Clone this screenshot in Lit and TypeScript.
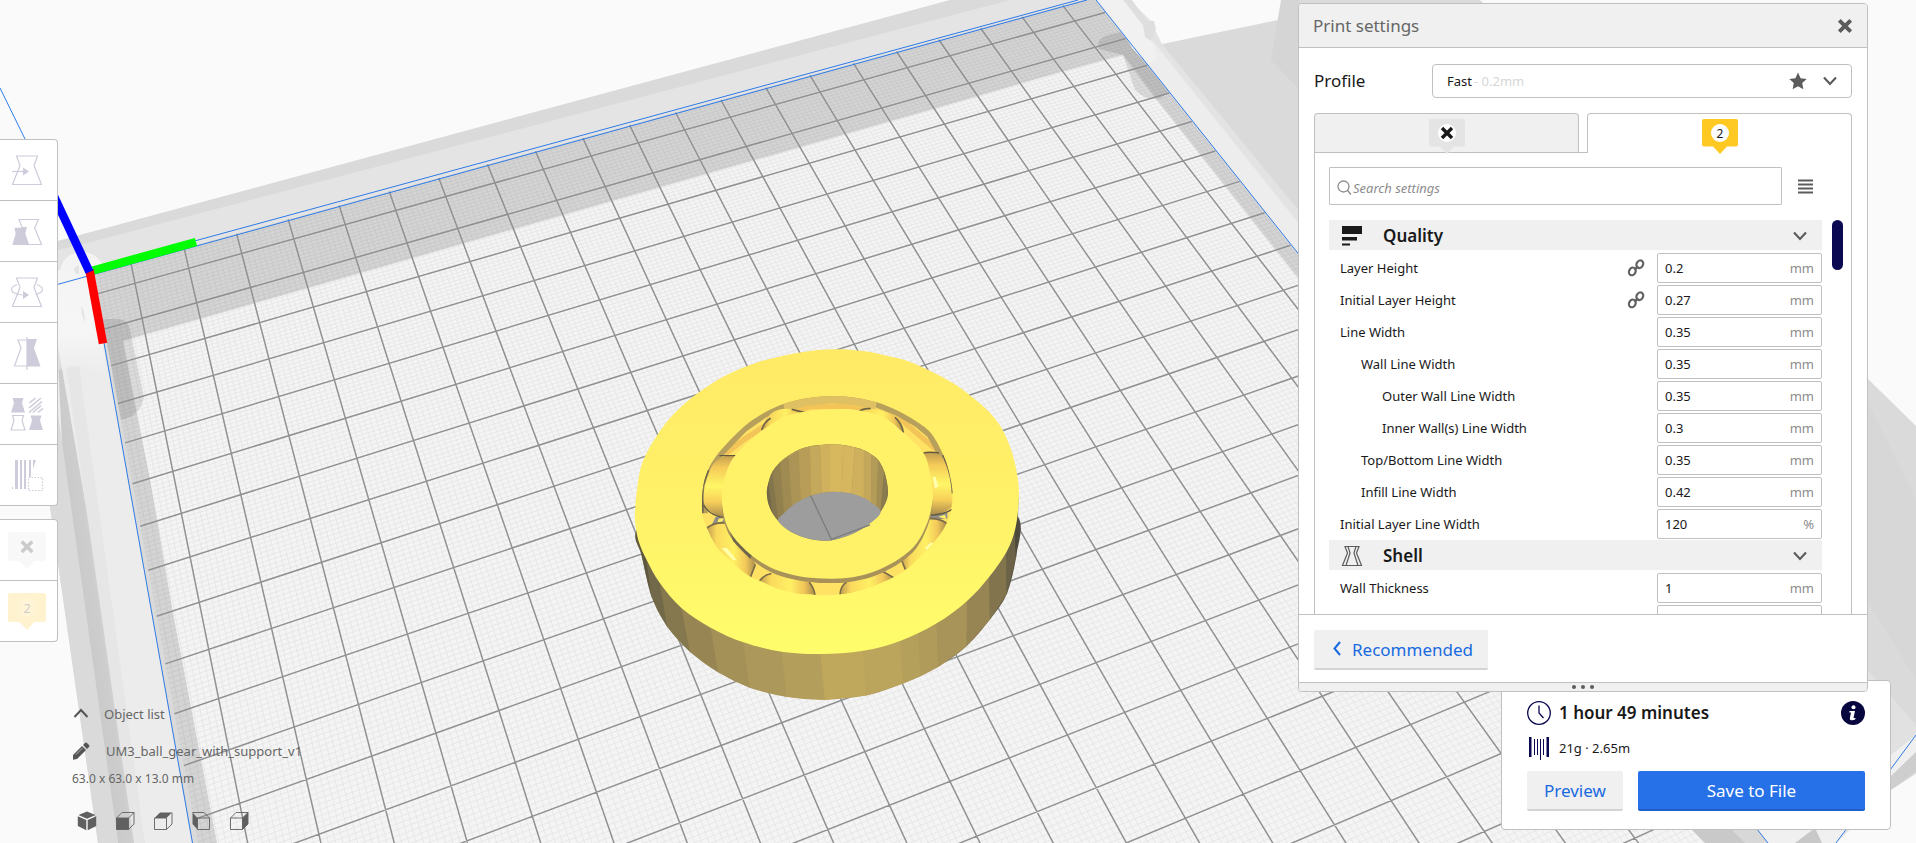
import { LitElement, html, svg, css, nothing } from "lit";
import { customElement, property, state } from "lit/decorators.js";
import { classMap } from "lit/directives/class-map.js";

type Pt = [number, number];

/* Solves the perspective mapping that takes four bed coordinates to screen points. */
function perspective(from: Pt[], to: Pt[]) {
  const m: number[][] = [];
  from.forEach(([u, v], i) => {
    const [x, y] = to[i];
    m.push([u, v, 1, 0, 0, 0, -u * x, -v * x, x]);
    m.push([0, 0, 0, u, v, 1, -u * y, -v * y, y]);
  });
  for (let c = 0; c < 8; c++) {
    let p = c;
    for (let r = c; r < 8; r++) if (Math.abs(m[r][c]) > Math.abs(m[p][c])) p = r;
    [m[c], m[p]] = [m[p], m[c]];
    for (let r = 0; r < 8; r++) {
      if (r === c) continue;
      const f = m[r][c] / m[c][c];
      for (let k = c; k < 9; k++) m[r][k] -= f * m[c][k];
    }
  }
  const h = m.map((row, i) => row[8] / row[i]);
  return (u: number, v: number): Pt => {
    const w = h[6] * u + h[7] * v + 1;
    return [(h[0] * u + h[1] * v + h[2]) / w, (h[3] * u + h[4] * v + h[5]) / w];
  };
}

const toScreen = perspective(
  [[1, 1], [1, 13], [21, 1], [17, 19]],
  [[135, 283.3], [239.7, 803.3], [1074.7, 21], [1355.9, 747.3]],
);
const BED = { u0: 0.32, u1: 21.75, v0: 0.4, v1: 23.6 };

const seg = (a: Pt, b: Pt) =>
  `M${a[0].toFixed(1)} ${a[1].toFixed(1)}L${b[0].toFixed(1)} ${b[1].toFixed(1)}`;

function gridPath(step: number) {
  let d = "";
  const n = Math.round(1 / step);
  for (let i = 0; i <= 22 * n; i++) {
    const u = i * step;
    if (u > BED.u0 && u < BED.u1 && !(n > 1 && i % n === 0))
      d += seg(toScreen(u, BED.v0), toScreen(u, BED.v1));
  }
  for (let i = 0; i <= 24 * n; i++) {
    const v = i * step;
    if (v > BED.v0 && v < BED.v1 && !(n > 1 && i % n === 0))
      d += seg(toScreen(BED.u0, v), toScreen(BED.u1, v));
  }
  return d;
}

const bedOutline = ([[BED.u0, BED.v0], [BED.u1, BED.v0], [BED.u1, BED.v1], [BED.u0, BED.v1]] as Pt[])
  .map(([u, v]) => toScreen(u, v).map((n) => n.toFixed(1)).join(","))
  .join(" ");

/* Closed curve through a ring of points. */
function ring(coords: string) {
  const n = coords.trim().split(/[\s,]+/).map(Number);
  const p: Pt[] = [];
  for (let i = 0; i < n.length; i += 2) p.push([n[i], n[i + 1]]);
  const at = (i: number) => p[(i + p.length) % p.length];
  let d = `M${p[0]}`;
  for (let i = 0; i < p.length; i++) {
    const [a, b, c, e] = [at(i - 1), at(i), at(i + 1), at(i + 2)];
    d += `C${b[0] + (c[0] - a[0]) / 6} ${b[1] + (c[1] - a[1]) / 6} ${c[0] - (e[0] - b[0]) / 6} ${c[1] - (e[1] - b[1]) / 6} ${c[0]} ${c[1]}`;
  }
  return d + "Z";
}

const OUTER = ring("75 545 82 470 98 395 140 318 195 248 268 186 350 135 440 98 520 77 600 63 665 58 720 59 780 66 830 77 890 92 960 122 1030 160 1085 200 1140 248 1175 295 1200 350 1216 405 1226 470 1225 530 1215 600 1190 665 1138 740 1072 812 980 880 872 932 760 962 632 972 515 965 400 937 302 893 215 835 150 760 110 690 88 640 77 590");
const SKIRT = ring("80 600 96 680 125 800 172 890 240 965 325 1027 420 1073 530 1100 645 1109 770 1096 880 1060 985 1010 1070 948 1140 868 1190 792 1218 680 1224 560 1100 500 650 500 180 500");
const TRACK = ring("277 550 277 490 290 430 325 370 400 292 460 250 520 222 590 205 665 198 735 203 800 217 865 243 925 278 965 312 1000 375 1018 430 1028 490 1024 540 1010 580 985 620 940 670 890 718 850 742 790 768 735 785 690 793 640 796 560 790 500 775 450 752 420 740 370 700 320 650 290 592");
const RACE = ring("335 500 345 440 375 377 455 302 530 258 600 243 670 238 740 240 820 262 880 308 940 368 960 430 968 500 955 570 920 640 870 685 810 718 760 735 700 745 620 745 550 735 480 712 420 672 370 620 345 570");
const BORE = ring("470 490 476 455 487 425 510 397 535 377 565 360 600 349 630 345 660 343 700 345 735 352 762 361 785 374 805 390 823 425 833 470 832 505 812 545 780 580 740 605 690 625 650 632 600 627 545 607 505 573 480 535");
const FLOOR = ring("505 573 522 550 545 528 572 511 602 497 635 489 670 485 700 487 730 492 757 502 780 515 812 545 780 580 740 605 690 625 650 632 600 627 545 607");

const SIDE_TOP: Pt[] = [[88, 640], [110, 690], [150, 760], [215, 835], [302, 893], [400, 937], [515, 965], [632, 972], [760, 962], [872, 932], [925, 908], [980, 880], [1072, 812], [1138, 740], [1190, 665], [1215, 600], [1225, 500]];
const SIDE_BOTTOM: Pt[] = [[96, 680], [125, 800], [172, 890], [240, 965], [325, 1027], [420, 1073], [530, 1100], [645, 1109], [770, 1096], [880, 1060], [932, 1037], [985, 1010], [1070, 948], [1140, 868], [1190, 792], [1218, 680], [1222, 590]];
const SIDE_FILL = ["#5d573f", "#72694a", "#85784e", "#978653", "#a49158", "#ac985a", "#b49e5b", "#bfa75c", "#bba45c", "#b5a05b", "#b09b5a", "#a89459", "#978654", "#82754e", "#6b6248", "#4c483c"];

const HOLE_TOP: Pt[] = [[470, 490], [476, 455], [487, 425], [510, 397], [535, 377], [565, 360], [600, 349], [630, 345], [660, 343], [700, 345], [735, 352], [762, 361], [785, 374], [805, 390], [823, 425], [833, 470]];
const HOLE_BASE: Pt[] = [[475, 525], [488, 552], [505, 573], [522, 550], [545, 528], [572, 511], [602, 497], [635, 489], [660, 485], [695, 487], [725, 491], [762, 505], [785, 520], [800, 534], [812, 545], [828, 515]];
const HOLE_FILL = ["#75694a", "#83754c", "#92814f", "#9f8b52", "#ab9456", "#b79d58", "#c4a85b", "#d0b15d", "#d8b85f", "#d6b65e", "#ceb05d", "#c3a75b", "#b39b58", "#a28e55", "#8b7b50"];

const facets = (a: Pt[], b: Pt[], fill: string[]) =>
  fill.map((f, i) => svg`<polygon points="${a[i]} ${a[i + 1]} ${b[i + 1]} ${b[i]}" fill=${f} stroke=${f} stroke-width="1"></polygon>`);

@customElement("build-plate")
export class BuildPlate extends LitElement {
  static styles = css`
    :host { display: block; }
    .scene { display: block; width: 100%; height: 100%; }
  `;

  render() {
    return html`<svg class="scene" viewBox="0 0 1916 843" preserveAspectRatio="xMinYMin slice" role="img" aria-label="3D view of the build plate">
      <defs>
        <linearGradient id="rail" gradientUnits="userSpaceOnUse" x1="84" y1="650" x2="119" y2="645">
          <stop offset="0" stop-color="#c9c9c9"></stop><stop offset=".55" stop-color="#cdcdcd"></stop><stop offset="1" stop-color="#e4e4e4"></stop>
        </linearGradient>
        <linearGradient id="corner" x1="0" y1="0" x2="0" y2="1">
          <stop offset="0" stop-color="#f4f4f4"></stop><stop offset=".6" stop-color="#f6f6f6"></stop><stop offset="1" stop-color="#f0f0f0" stop-opacity=".3"></stop>
        </linearGradient>
        <linearGradient id="skirt">
          <stop offset="0" stop-color="#5d573f"></stop><stop offset=".12" stop-color="#8d7f50"></stop><stop offset=".5" stop-color="#bfa75c"></stop><stop offset=".8" stop-color="#a08c57"></stop><stop offset="1" stop-color="#4c483c"></stop>
        </linearGradient>
        <linearGradient id="top" x1="0" y1="0" x2="0" y2="1">
          <stop offset="0" stop-color="#ffea66"></stop><stop offset=".5" stop-color="#fff168"></stop><stop offset="1" stop-color="#fffd6c"></stop>
        </linearGradient>
        <linearGradient id="ballL" x1="0" y1="0" x2="0" y2="1">
          <stop offset="0" stop-color="#c49f50"></stop><stop offset=".2" stop-color="#f5cb58"></stop><stop offset=".5" stop-color="#fff766"></stop><stop offset=".75" stop-color="#f8cf5a"></stop><stop offset="1" stop-color="#a88a4c"></stop>
        </linearGradient>
        <linearGradient id="ballB" x1="0" y1="0" x2="1" y2="0">
          <stop offset="0" stop-color="#c09b50"></stop><stop offset=".2" stop-color="#fad95c"></stop><stop offset=".55" stop-color="#fff064"></stop><stop offset=".8" stop-color="#f2c758"></stop><stop offset="1" stop-color="#a88c4e"></stop>
        </linearGradient>
        <clipPath id="track"><path d=${TRACK}></path></clipPath>
        <clipPath id="bore"><path d=${BORE}></path></clipPath>
        <clipPath id="bed"><polygon points=${bedOutline}></polygon></clipPath>
      </defs>

      <rect width="1916" height="843" fill="#fafafa"></rect>
      <!-- printer frame -->
      <polygon points="50,243 950,0 1130,0 1700,700 1766,843 98,843 50,507" fill="#dadada"></polygon>
      <polygon points="58,250 95,241 1010,0 1098,0 92,277 58,284" fill="#e4e4e4"></polygon>
      <polygon points="1096,0 1140,0 1916,940 1768,843" fill="#ededed"></polygon>
      <polygon points="1120,0 1142,0 1460,400 1916,960 1860,960 1440,400" fill="#e3e3e3"></polygon>
      <polygon points="1162,44 1300,14 1300,0 1480,0 1867,378 1916,426 1916,772 1891,788 1768,860 1300,212" fill="#dadada"></polygon>
      <polygon points="1130,0 1281,0 1278,20 1162,44 1150,20" fill="#fafafa"></polygon>
      <polygon points="1281,0 1300,0 1300,90 1271,60" fill="#d5d5d5"></polygon>
      <polygon points="1867,400 1916,500 1916,680 1867,600" fill="#d7d7d7"></polygon>
      <polygon points="1867,669 1916,725 1916,843 1836,843 1867,800" fill="#e1e1e1"></polygon>
      <polygon points="1891,755 1916,735 1916,760 1891,776" fill="#f0f0f0"></polygon>
      <polygon points="1891,776 1916,752 1916,772 1891,790" fill="#cecece"></polygon>
      <polygon points="1891,790 1916,774 1916,843 1836,843" fill="#fafafa"></polygon>
      <!-- left rail -->
      <polygon points="57,280 92,275 192,843 98,843 57,440" fill="#ececec"></polygon>
      <polygon points="56,400 62,443 118,843 98,843 50,507" fill="#dadada"></polygon>
      <polygon points="57,340 66,392 145,843 118,843 62,443" fill="url(#rail)"></polygon>
      <polygon points="66,366 79,366 145,843 134,843" fill="#e6e6e6"></polygon>
      <ellipse cx="82" cy="272" rx="22" ry="20" fill="#f3f3f3"></ellipse>
      <path d="M57 270Q85 265 98 300L106 374 80 366 57 370Z" fill="url(#corner)"></path>
      <path d="M74 268l5-3v10l-4-2zM81 305l3 6 1 12-3-8z" fill="#e4e4e4"></path>

      <!-- bed -->
      <polygon points=${bedOutline} fill="#f4f4f4"></polygon>
      <path d=${gridPath(0.1)} stroke="#e5e5e5" stroke-width=".8" fill="none"></path>
      <g clip-path="url(#bed)" fill="#000">
        <path fill-opacity=".13" d="M80 260L1096 -10 1320 280 1900 990 1840 990 1298 278 1157 100 1123 55 1040 78 958 102 340 279 123 341 134 400 150 480 173 613 217 843 190 850Z"></path>
        <path fill-opacity=".1" d="M100 319h20q8 2 10 10l14 68q-4 20-24 23h-10z"></path>
        <path fill-opacity=".1" d="M1098 43q2-8 24-11l8-6 45 60-14 12q-14 4-26-8l-12-35-24-6z"></path>
      </g>
      <path d=${gridPath(1)} stroke="#909193" stroke-width="1.5" fill="none"></path>

      <!-- front corner of the frame -->
      <polygon points="1705,843 1690,828 1730,828 1745,843" fill="#c9c9c9"></polygon>
      <polygon points="1745,843 1730,828 1760,828 1772,843" fill="#d8d8d8"></polygon>
      <polygon points="1757,828 1846,828 1836,843 1768,843" fill="#f0f0f0"></polygon>
      <polygon points="1795,843 1815,828 1822,843" fill="#c8c8c8"></polygon>

      <!-- near top corner bracket -->
      <path d="M1098 0l24 30 10 18 16 17 8-6-1-10-12-24-20-25z" fill="#f1f1f1"></path>
      <path d="M1124 0h8l14 20 8 1 2 8-5 12-6-4-2-12z" fill="#dedede"></path>

      <g stroke="#2f7be8" stroke-width="1" fill="none">
        <path d="M58 284.300L1087 0M189 242.500L1078 0M1096 0L1291 244.500 1768 843M92 275L192.500 843M0 88L25 139M1836 843L1916 735"></path>
      </g>
      <!-- origin axes -->
      <g stroke-width="8.500" fill="none">
        <path d="M93 270.500L196 242" stroke="#0f0"></path>
        <path d="M89.500 270L103 343.500" stroke="#f00"></path>
        <path d="M89.500 272L52 192" stroke="#00f"></path>
      </g>

      <!-- ball bearing -->
      <g transform="translate(610 330) scale(.33333)">
        <path d=${SKIRT} fill="url(#skirt)"></path>
        ${facets(SIDE_TOP, SIDE_BOTTOM, SIDE_FILL)}
        <path fill="url(#top)" d=${OUTER}></path>
        <g clip-path="url(#track)">
          <rect x="270" y="190" width="770" height="620" fill="#ffe264"></rect>
          <path d="M340 376L400 330 460 290 520 255 600 230 700 228 790 240 880 275 990 368" stroke="#f3c457" stroke-width="16" fill="none"></path>
          <path d="M278 550V490L290 430 325 370 400 292 460 250 520 222 590 205 665 198 735 203 800 217 865 243 925 278 965 312 1000 375 1018 430" stroke="#b7a05c" stroke-width="30" fill="none"></path>
          <path d="M520 222L590 205 665 198 735 203 800 217" stroke="#dfc062" stroke-width="44" fill="none"></path>
          <path d="M278 550V470L295 420" stroke="#6b624a" stroke-width="6" fill="none"></path>
          <path d="M1000 375L1018 430 1028 490" stroke="#6b624a" stroke-width="8" fill="none"></path>
          <path d="M305 585l12-25h26v20zM958 568l4-14 50-8v20z" fill="#8f8d86"></path>
          <path d="M326 566l16-2-4 10-16 4zM985 560l20-6 4 14z" fill="#ffee68"></path>
          <!-- balls -->
          <path d="M455 300Q475 225 550 238L586 248 530 270 455 305Z" fill="url(#ballB)"></path>
          <path d="M740 248Q775 228 820 243 870 262 880 308L820 270Z" fill="url(#ballB)"></path>
          <path d="M455 300q8-24 27-35M545 238l40 10M740 248q18-14 42-12M855 262q22 20 25 46" stroke="#6f6446" stroke-width="5" fill="none"></path>
          <path d="M378 376Q320 372 300 420 275 480 282 520 300 556 345 562L350 440Z" fill="url(#ballL)"></path>
          <path d="M937 370Q985 362 1000 385 1030 450 1025 530 1010 550 958 556L975 470Z" fill="url(#ballL)"></path>
          <path d="M328 377h50M280 525q22 34 65 38M937 370q20-6 50-1M1026 538q-20 14-66 18" stroke="#62583f" stroke-width="4" fill="none"></path>
          <path d="M290 594Q320 575 350 582L437 702 422 740Q320 690 290 594Z" fill="url(#ballB)"></path>
          <path d="M958 566Q1000 562 1010 580 985 660 886 720L872 684Z" fill="url(#ballB)"></path>
          <path d="M448 754Q460 735 485 730L600 755 615 795Q520 795 448 754Z" fill="url(#ballB)"></path>
          <path d="M690 795Q695 765 712 756L815 722 852 743Q790 780 690 795Z" fill="url(#ballB)"></path>
          <path d="M290 594q25-18 55-15M422 740l14-36M448 754q14-20 36-23M598 757q14 18 17 38M690 794q2-28 20-38M815 722l36 21M886 718l-14-34M958 566q30-2 52 14" stroke="#7a6c48" stroke-width="5" fill="none"></path>
          <path d="M335 655l15-2 30 38-12-2zM968 440l8 0 10 30-12 4zM945 655l18-18 10 6-16 20z" fill="#ffffae"></path>
        </g>
        <path d=${RACE} transform="translate(0 13)" fill="#a8925a" clip-path="inset(262px 0 0 0)"></path>
        <path d="M345 565L370 634 420 686 426 676 350 560Z" fill="#6f654a"></path>
        <path d=${RACE} fill="#fff269"></path>
        <g clip-path="url(#bore)">
          <rect x="460" y="340" width="380" height="300" fill="#85784e"></rect>
          ${facets(HOLE_TOP, HOLE_BASE, HOLE_FILL)}
          <path d="M505 397L565 360 630 342 700 342 762 358 805 387" stroke="#bda25a" stroke-width="6" fill="none" stroke-opacity=".4"></path>
        </g>
        <path d=${FLOOR} fill="#9d9d9d"></path>
        <path d="M602 497L664 628 780 585" stroke="#7d7d7d" stroke-width="4" fill="none"></path>
      </g>
    </svg>`;
  }
}

const figure = "M4.5 1h21L22 10.500 29.500 29.500H.5L8 10.500z";
const smallFigure = "M1.500 0h11L11 5l3 9.500H0L3 5z";

const toolIcons: Record<string, unknown> = {
  move: svg`<path d=${figure}></path><path d="M0 16.500h11"></path><path class="solid" d="M11 12.500l6 4-6 4z"></path>`,
  scale: svg`<path d="M14.700 11.500H10L7 3.500h19.300L22.700 12 29.500 28.500H17"></path><path class="solid" d="M2.300 11.700h12.400l-1.400 6 4 11.300H.3l3.400-11.300z"></path>`,
  rotate: svg`<path d=${figure}></path><path d="M5 7.500C1 9-.5 11-.5 12.500c0 2.500 4 5 11 5.500M25 7.500c4 1.500 5.500 3.500 5.500 5 0 2.500-3 4-7 5"></path><path class="solid" d="M11 14l6 4-6 4z"></path>`,
  mirror: svg`<path d="M15-1v33"></path><path d="M15 2H6l3 8-6.500 18H15"></path><path class="solid" d="M15 1h10l-3 9 6.500 18.500H15z"></path>`,
  models: svg`<g transform="translate(-1 -1)"><path class="solid" d=${smallFigure}></path><path d="M18.500 5l6-5M18 10l12-10M18 14.500l13-11M22 14.500l8-7M27 14.500l5-4" stroke-width="1.600"></path><path d=${smallFigure} transform="translate(0 17.500)"></path><path class="solid" d=${smallFigure} transform="translate(18 17.500)"></path></g>`,
  blocker: svg`<path class="solid" d="M3 0h3v29H3V9zM8 0h2v29H8zM12 0h2v29h-2zM17 0h2v17h-2zM21 0h3l-3 9zM0 27h1v2H0z"></path><path d="M16.500 17.500h14v13h-14z" stroke-dasharray="1.500 1.500"></path>`,
};

const chevron = svg`<path d="M2 4.500l6 6.500 6-6.500" fill="none" stroke="currentColor" stroke-width="2.200"></path>`;
const cross = svg`<path d="M2 2l10 10M12 2L2 12" stroke="currentColor" stroke-width="3.400"></path>`;

@customElement("extruder-badge")
export class ExtruderBadge extends LitElement {
  @property() label = "";
  @property({ type: Boolean }) enabled = false;
  @property({ type: Boolean }) faint = false;

  static styles = css`
    :host { display: block; }
    svg { display: block; width: 100%; height: 100%; }
    .body { fill: #e4e4e4; }
    .on { fill: #ffc924; }
    .disc { fill: #fff; }
    .faint .disc { opacity: .15; }
    .text { font: 12px "Noto Sans", sans-serif; fill: #191919; text-anchor: middle; }
    .cross { color: #191919; }
    .faint { opacity: .22; }
  `;

  render() {
    return html`<svg class=${classMap({ faint: this.faint })} viewBox="0 0 36 35" aria-hidden="true">
      <path class=${classMap({ body: true, on: this.enabled })} d="M2 0h32q2 0 2 2v23.500q0 2-2 2h-9L18 35l-7-7.500H2q-2 0-2-2V2q0-2 2-2z"></path>
      <circle class="disc" cx="18" cy="14" r="9"></circle>
      ${this.enabled
        ? svg`<text class="text" x="18" y="18.500">${this.label}</text>`
        : svg`<g class="cross" transform="translate(11 7)">${cross}</g>`}
    </svg>`;
  }
}

@customElement("tool-rail")
export class ToolRail extends LitElement {
  static styles = css`
    :host { display: flex; flex-direction: column; gap: 13px; width: 58px; }
    .group { display: flex; flex-direction: column; background: #fff; border: 1px solid #c0c0c0; border-left: 0; border-radius: 0 4px 4px 0; }
    .tool { display: flex; align-items: center; height: 60px; padding: 0 0 0 12px; border: 0; background: none; }
    .tool + .tool { border-top: 1px solid #c0c0c0; height: 61px; }
    .icon { width: 30px; height: 30px; overflow: visible; fill: none; stroke: #cecbda; stroke-width: 1.2; }
    .solid { fill: #cecbda; stroke: none; }
    .extruder { padding-left: 8px; }
    .badge { width: 38px; height: 37px; }
  `;

  render() {
    const names: Record<string, string> = { move: "Move", scale: "Scale", rotate: "Rotate", mirror: "Mirror", models: "Per model settings", blocker: "Support blocker" };
    return html`
      <div class="group">
        ${Object.keys(names).map((k) => html`<button class="tool" aria-label=${names[k]}><svg class="icon" viewBox="0 0 30 30">${toolIcons[k]}</svg></button>`)}
      </div>
      <div class="group">
        <button class="tool extruder" aria-label="Extruder 1"><extruder-badge class="badge" faint></extruder-badge></button>
        <button class="tool extruder" aria-label="Extruder 2"><extruder-badge class="badge" faint enabled label="2"></extruder-badge></button>
      </div>`;
  }
}

@customElement("object-info")
export class ObjectInfo extends LitElement {
  static styles = css`
    :host { display: flex; flex-direction: column; font: 13px/20px "Noto Sans", sans-serif; color: #666; }
    .row { display: flex; align-items: center; gap: 14px; height: 37px; padding: 0; border: 0; background: none; font: inherit; color: inherit; text-align: left; }
    .icon { width: 18px; height: 18px; }
    .size { margin-bottom: 22px; font-size: 12px; }
    .name { padding-left: 2px; }
    .views { display: flex; gap: 18px; padding-left: 5px; }
    .view { width: 20px; height: 20px; padding: 0; border: 0; background: none; color: #606060; }
    .cube { display: block; width: 20px; height: 20px; }
    .face { fill: currentColor; }
    .edge { fill: none; stroke: currentColor; stroke-width: .9; }
  `;

  render() {
    const wire = svg`<path class="edge" d="M1.500 7L7 1.500h12V13l-5.500 5.500h-12zM1.500 7h12v11.500M13.500 7L19 1.500"></path>`;
    const cubes = [
      ["3D view", svg`<path class="face" d="M10 .5L18.500 4 10 7.800 1.500 4zM.8 5.300L9.300 9v10.200L.8 15zM19.200 5.300L10.700 9v10.200L19.200 15z"></path>`],
      ["Front view", svg`${wire}<path class="face" d="M1.500 7h12v11.500h-12z"></path>`],
      ["Top view", svg`<path class="edge" d="M1.500 7h12v11.500h-12zM13.500 18.500L19 13V1.500"></path><path class="face" d="M1.500 7L7 1.500h12L13.500 7z"></path>`],
      ["Left view", svg`<path class="edge" d="M6.500 7h12v11.500h-12zM1.500 1.500H13L18.500 7"></path><path class="face" d="M1.500 1.500L6.500 7v11.500L1.500 13z"></path>`],
      ["Right view", svg`${wire}<path class="face" d="M13.500 7L19 1.500V13l-5.500 5.500z"></path>`],
    ];
    return html`
      <button class="row">
        <svg class="icon" viewBox="0 0 18 18"><path d="M2.500 12L9 5l6.500 7" fill="none" stroke="#555" stroke-width="2"></path></svg>
        Object list
      </button>
      <button class="row">
        <svg class="icon" viewBox="0 0 18 18"><path d="M1 13l9-9 4 4-9 9-4 .8zM11 3l2-2q1-1 2 0l2 2q1 1 0 2l-2 2z" fill="#555"></path><path d="M4 12.500l6.500-6.500" stroke="#ccc" stroke-width=".8"></path></svg>
        <span class="name">UM3_ball_gear_with_support_v1</span>
      </button>
      <div class="size">63.0 x 63.0 x 13.0 mm</div>
      <div class="views">
        ${cubes.map(([name, art]) => html`<button class="view" aria-label=${name}><svg class="cube" viewBox="0 0 20 20">${art}</svg></button>`)}
      </div>`;
  }
}

interface Setting { label: string; value: string; unit: string; depth: number; linked?: boolean }

const quality: Setting[] = [
  { label: "Layer Height", value: "0.2", unit: "mm", depth: 0, linked: true },
  { label: "Initial Layer Height", value: "0.27", unit: "mm", depth: 0, linked: true },
  { label: "Line Width", value: "0.35", unit: "mm", depth: 0 },
  { label: "Wall Line Width", value: "0.35", unit: "mm", depth: 1 },
  { label: "Outer Wall Line Width", value: "0.35", unit: "mm", depth: 2 },
  { label: "Inner Wall(s) Line Width", value: "0.3", unit: "mm", depth: 2 },
  { label: "Top/Bottom Line Width", value: "0.35", unit: "mm", depth: 1 },
  { label: "Infill Line Width", value: "0.42", unit: "mm", depth: 1 },
  { label: "Initial Layer Line Width", value: "120", unit: "%", depth: 0 },
];
const shell: Setting[] = [
  { label: "Wall Thickness", value: "1", unit: "mm", depth: 0 },
  { label: "", value: "", unit: "", depth: 1 },
];

@customElement("print-settings")
export class PrintSettings extends LitElement {
  @state() private extruder = 2;

  static styles = css`
    :host { display: flex; flex-direction: column; box-sizing: border-box; background: #fff; border: 1px solid #c0c0c0; border-radius: 4px; font: 13px/20px "Noto Sans", sans-serif; color: #191919; overflow: hidden; }
    * { box-sizing: border-box; }
    button, input, select { font: inherit; color: inherit; }
    button { padding: 0; border: 0; background: none; }
    .head { display: flex; align-items: center; justify-content: space-between; height: 44px; padding: 0 14px 0 14px; background: #f0f0f0; border-bottom: 1px solid #c0c0c0; flex: none; }
    .title { margin: 0; font-size: 17px; font-weight: 400; color: #666; }
    .close { color: #5c5c5c; width: 16px; height: 16px; }
    .close svg { display: block; width: 16px; height: 16px; }
    .main { display: flex; flex-direction: column; flex: 1; min-height: 0; padding: 16px 15px 0; }
    .profile { display: flex; align-items: center; justify-content: space-between; flex: none; margin-bottom: 15px; }
    .profile-label { font-size: 17px; }
    .field { display: grid; width: 420px; }
    .select { grid-area: 1 / 1; height: 34px; appearance: none; border: 1px solid #c0c0c0; border-radius: 4px; background: #fff; padding: 0 14px; }
    .adorn { grid-area: 1 / 1; display: flex; align-items: center; padding: 0 14px 0 42px; pointer-events: none; color: #5c5c5c; gap: 15px; }
    .height { color: #d6d6d6; flex: 1; }
    .star { width: 18px; height: 18px; }
    .chev { width: 16px; height: 16px; color: #5c5c5c; }
    .tabs { display: grid; grid-template-columns: 1fr 1fr; column-gap: 8px; flex: none; border-bottom: 1px solid #c0c0c0; height: 40px; }
    .tab { display: flex; justify-content: center; height: 39px; padding-top: 5px; background: #f0f0f0; border: 1px solid #c0c0c0; border-bottom: 0; border-radius: 4px 4px 0 0; }
    .tab.active { background: #fff; height: 40px; }
    .badge { width: 36px; height: 35px; }
    .body { flex: 1; min-height: 0; display: flex; flex-direction: column; border: 1px solid #c0c0c0; border-width: 0 1px; padding: 14px 8px 0 14px; overflow: hidden; }
    .search { display: flex; align-items: center; gap: 16px; flex: none; padding-right: 30px; margin-bottom: 15px; }
    .box { flex: 1; display: flex; align-items: center; gap: 1px; height: 38px; padding: 3px 6px 0; border: 1px solid #c0c0c0; border-radius: 1px; color: #8c8c8c; }
    .query { flex: 1; border: 0; outline: 0; padding: 0; background: none; }
    .query::placeholder { color: #8c8c8c; font-style: italic; opacity: 1; }
    .lens { width: 16px; height: 16px; }
    .menu { width: 15px; height: 19px; }
    .menu svg { display: block; width: 15px; height: 15px; }
    .scroller { display: flex; justify-content: space-between; flex: 1; min-height: 0; }
    .list { width: 493px; overflow: hidden; }
    .thumb { width: 11px; height: 50px; border-radius: 6px; background: #0a0850; }
    .cat { display: flex; align-items: center; width: 100%; height: 30px; margin-bottom: 2px; padding: 2px 14px 0 12px; background: #f0f0f0; gap: 20px; }
    .cat-icon { width: 22px; height: 22px; }
    .cat-name { flex: 1; text-align: left; font-size: 17px; font-weight: 600; }
    .row { display: flex; align-items: center; height: 32px; padding-left: 11px; }
    .name { flex: 1; }
    .depth1 { padding-left: 21px; }
    .depth2 { padding-left: 42px; }
    .link { width: 18px; height: 18px; margin-right: 12px; }
    .value { display: grid; width: 165px; }
    .input { grid-area: 1 / 1; width: 100%; height: 30px; padding: 0 7px; border: 1px solid #c0c0c0; border-radius: 2px; background: #fff; }
    .unit { grid-area: 1 / 1; justify-self: end; align-self: center; padding-right: 8px; color: #8c8c8c; pointer-events: none; }
    .foot { flex: none; height: 68px; padding: 15px; border-top: 1px solid #c0c0c0; }
    .back { display: flex; align-items: center; height: 40px; padding: 2px 15px 0 17px; gap: 9px; background: #f0f0f0; border-bottom: 2px solid #d4d4d4; border-radius: 2px; color: #196ae0; font-size: 17px; }
    .arrow { width: 12px; height: 20px; }
    .grip { flex: none; display: flex; align-items: center; justify-content: center; gap: 5px; height: 9px; border-top: 1px solid #c0c0c0; background: #f0f0f0; }
    .dot { width: 4px; height: 4px; border-radius: 50%; background: #5c5c5c; }
  `;

  private row(s: Setting, i: number, group: string) {
    const id = `${group}-${i}`;
    return html`<div class="row">
      <label class=${classMap({ name: true, depth1: s.depth === 1, depth2: s.depth === 2 })} for=${id}>${s.label}</label>
      ${s.linked
        ? html`<svg class="link" viewBox="0 0 18 18" fill="none" stroke="#606060" stroke-width="2.200"><ellipse cx="5.300" cy="12.500" rx="3.200" ry="4" transform="rotate(28 5.500 12.500)"></ellipse><ellipse cx="12.800" cy="5.200" rx="3.200" ry="4" transform="rotate(28 12.800 5.200)"></ellipse><path d="M7.500 11l3.500-4"></path></svg>`
        : nothing}
      <div class="value">
        <input class="input" id=${id} .value=${s.value} />
        <span class="unit">${s.unit}</span>
      </div>
    </div>`;
  }

  private category(name: string, icon: unknown) {
    return html`<button class="cat">
      <svg class="cat-icon" viewBox="0 0 22 22">${icon}</svg>
      <span class="cat-name">${name}</span>
      <svg class="chev" viewBox="0 0 16 16">${chevron}</svg>
    </button>`;
  }

  private tab(n: number) {
    return html`<button class=${classMap({ tab: true, active: this.extruder === n })} role="tab" aria-label="Extruder ${n}" @click=${() => (this.extruder = n)}>
      <extruder-badge class="badge" ?enabled=${n === 2} label=${n}></extruder-badge>
    </button>`;
  }

  render() {
    return html`
      <header class="head">
        <h1 class="title">Print settings</h1>
        <button class="close" aria-label="Close"><svg viewBox="0 0 14 14">${cross}</svg></button>
      </header>
      <div class="main">
        <div class="profile">
          <label class="profile-label" for="profile">Profile</label>
          <div class="field">
            <select class="select" id="profile"><option>Fast</option></select>
            <div class="adorn">
              <span class="height">- 0.2mm</span>
              <svg class="star" viewBox="0 0 18 18"><path d="M9 .5l2.600 5.700 6.100.7-4.500 4.200 1.200 6.200L9 14.200l-5.400 3.100 1.200-6.200L.3 6.900l6.100-.7z" fill="currentColor"></path></svg>
              <svg class="chev" viewBox="0 0 16 16">${chevron}</svg>
            </div>
          </div>
        </div>
        <div class="tabs" role="tablist">${this.tab(1)}${this.tab(2)}</div>
        <div class="body">
          <div class="search">
            <div class="box">
              <svg class="lens" viewBox="0 0 16 16" fill="none" stroke="currentColor" stroke-width="1.300"><circle cx="7.500" cy="6.500" r="5.500"></circle><path d="M11.500 10.500l3.500 4"></path></svg>
              <input class="query" placeholder="Search settings" aria-label="Search settings" />
            </div>
            <button class="menu" aria-label="Setting visibility"><svg viewBox="0 0 15 15"><path d="M0 1.500h15M0 5.500h15M0 9.500h15M0 13.500h15" stroke="#5c5c5c" stroke-width="1.800"></path></svg></button>
          </div>
          <div class="scroller">
            <div class="list">
              ${this.category("Quality", svg`<path d="M1 1h20v8H1zM1 12h15v3.500H1zM1 18.500h8v2H1z" fill="#191919"></path>`)}
              ${quality.map((s, i) => this.row(s, i, "quality"))}
              ${this.category("Shell", svg`<path d="M4 1.500h14L15.500 8l5 12.500h-19L6.500 8zM7 1.500L9 8 5 20.500M15 1.500L13 8l4 12.500" fill="none" stroke="#5c5c5c" stroke-width="1.200"></path>`)}
              ${shell.map((s, i) => this.row(s, i, "shell"))}
            </div>
            <div class="thumb"></div>
          </div>
        </div>
      </div>
      <footer class="foot">
        <button class="back"><svg class="arrow" viewBox="0 0 12 20"><path d="M9 2L3.500 8.500 9 15" fill="none" stroke="currentColor" stroke-width="2"></path></svg>Recommended</button>
      </footer>
      <div class="grip"><span class="dot"></span><span class="dot"></span><span class="dot"></span></div>`;
  }
}

@customElement("job-card")
export class JobCard extends LitElement {
  static styles = css`
    :host { display: flex; flex-direction: column; box-sizing: border-box; padding: 20px 25px 18px; background: #fff; border: 1px solid #c0c0c0; border-radius: 4px; font: 13px/24px "Noto Sans", sans-serif; color: #191919; }
    .line { display: flex; align-items: center; gap: 8px; }
    .material { margin: 11px 0; }
    .icon { width: 24px; height: 24px; }
    .time { flex: 1; font-size: 17px; font-weight: 600; }
    .info { width: 24px; height: 24px; padding: 0; border: 0; background: none; }
    .info svg { display: block; width: 24px; height: 24px; }
    .actions { display: flex; gap: 15px; }
    .button { height: 40px; padding: 2px 17px 0; border: 0; border-bottom: 2px solid #d4d4d4; border-radius: 2px; background: #f0f0f0; color: #196ae0; font: 17px/20px "Noto Sans", sans-serif; }
    .primary { flex: 1; background: #2671e8; color: #fff; border-color: #1f5fca; }
  `;

  render() {
    return html`
      <div class="line">
        <svg class="icon" viewBox="0 0 24 24" fill="none" stroke="#0a0850" stroke-width="1.300"><circle cx="12" cy="12" r="11.300"></circle><path d="M12 4.500V12l4.500 5"></path></svg>
        <span class="time">1 hour 49 minutes</span>
        <button class="info" aria-label="Details"><svg viewBox="0 0 24 24"><circle cx="12" cy="12" r="12" fill="#08063f"></circle><circle cx="12.500" cy="6.300" r="2" fill="#fff"></circle><path d="M8.500 10h5.500l-1.500 7h2l-.3 1.600q-2.200 1-4.200.7-1.500-.4-1.100-2.200l1.100-5.500H8.200z" fill="#fff"></path></svg></button>
      </div>
      <div class="line material">
        <svg class="icon" viewBox="0 0 24 24" fill="#0a0850"><path d="M2 1h2.500v20H2zM7 3h1v16H7zM10 3h1v16h-1zM13 3h1v21h-1zM16 3h1v16h-1zM19.500 1H22v20h-2.500z"></path></svg>
        21g · 2.65m
      </div>
      <div class="actions">
        <button class="button">Preview</button>
        <button class="button primary">Save to File</button>
      </div>`;
  }
}

@customElement("app-root")
export class AppRoot extends LitElement {
  static styles = css`
    :host { display: block; position: relative; height: 100vh; overflow: hidden; background: #fafafa; }
    .plate { position: absolute; inset: 0; }
    .rail { position: absolute; left: 0; top: 139px; }
    .object { position: absolute; left: 72px; bottom: 12px; }
    .job { position: absolute; right: 25px; bottom: 13px; width: 390px; }
    .settings { position: absolute; top: 3px; right: 48px; bottom: 151px; width: 570px; }
  `;

  render() {
    return html`
      <build-plate class="plate"></build-plate>
      <tool-rail class="rail"></tool-rail>
      <object-info class="object"></object-info>
      <job-card class="job"></job-card>
      <print-settings class="settings"></print-settings>`;
  }
}
